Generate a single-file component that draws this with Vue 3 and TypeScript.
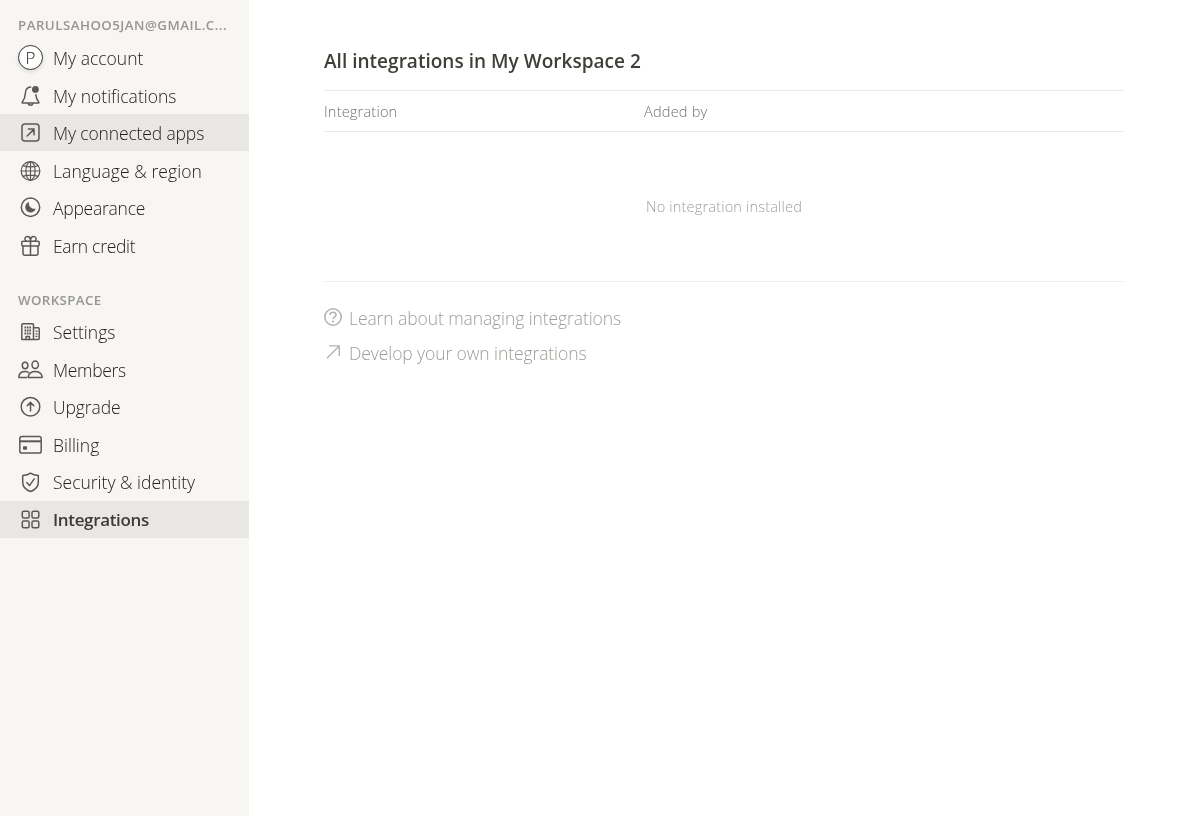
<script setup lang="ts">
interface NavItem {
  id: string
  label: string
  hovered?: boolean
  active?: boolean
}

interface NavSection {
  id: string
  title: string
  items: NavItem[]
}

const sections: NavSection[] = [
  {
    id: 'account',
    title: 'PARULSAHOO5JAN@GMAIL.C...',
    items: [
      { id: 'profile', label: 'My account' },
      { id: 'notifications', label: 'My notifications' },
      { id: 'apps', label: 'My connected apps', hovered: true },
      { id: 'language', label: 'Language & region' },
      { id: 'appearance', label: 'Appearance' },
      { id: 'credit', label: 'Earn credit' },
    ],
  },
  {
    id: 'workspace',
    title: 'WORKSPACE',
    items: [
      { id: 'settings', label: 'Settings' },
      { id: 'members', label: 'Members' },
      { id: 'upgrade', label: 'Upgrade' },
      { id: 'billing', label: 'Billing' },
      { id: 'security', label: 'Security & identity' },
      { id: 'integrations', label: 'Integrations', active: true },
    ],
  },
]
</script>

<template>
  <div class="page">
    <nav class="sidebar">
      <section v-for="s in sections" :key="s.id" :class="['section', s.id]">
        <h2 class="section-title">{{ s.title }}</h2>
        <a v-for="item in s.items" :key="item.id" :class="['item', item.id, { hovered: item.hovered, active: item.active }]">
          <span v-if="item.id === 'profile'" class="avatar"><span>P</span></span>
          <svg v-else class="icon" viewBox="0 0 25 25">
            <template v-if="item.id === 'notifications'">
              <path d="M12.7 4C9 4.3 7.5 6.7 7.4 10C7.3 14.5 6.1 16.7 4.2 19.2V20H20.8V19.2C19.1 17 18.1 15 17.8 11.8" />
              <path d="M10 20.6a2.6 2.3 0 0 0 5 0" />
              <circle class="solid" cx="17.4" cy="6.4" r="3.4" />
            </template>
            <template v-else-if="item.id === 'apps'">
              <rect x="4" y="4" width="17" height="17" rx="3" />
              <path d="M9.2 16L15.8 9.4M10.4 9.1H16v5.6" />
            </template>
            <template v-else-if="item.id === 'language'">
              <g class="fine">
                <circle cx="12.5" cy="13" r="9.3" />
                <ellipse cx="12.5" cy="13" rx="4.6" ry="9.3" />
                <path d="M12.5 3.7v18.6M3.2 13h18.6M5.2 7.6c4 1.7 10.6 1.7 14.6 0M5.2 18.4c4-1.7 10.6-1.7 14.6 0" />
              </g>
            </template>
            <template v-else-if="item.id === 'appearance'">
              <circle cx="12.5" cy="12.3" r="9.2" />
              <path class="solid" d="M11 7.1A5.3 5.3 0 1 0 17.7 13.6A5.4 5.4 0 0 1 11 7.1z" />
            </template>
            <template v-else-if="item.id === 'credit'">
              <rect x="3.8" y="8.3" width="17.4" height="4.7" rx="1.3" />
              <path d="M5 13v7.2a2 2 0 0 0 2 2h11a2 2 0 0 0 2-2V13M12.5 8.3v13.9" />
              <path d="M12.5 8.2C12.5 5.2 11.2 3.5 9.3 3.5C6.4 3.5 6.2 7 8.2 8.2M12.5 8.2C12.5 5.2 13.8 3.5 15.7 3.5C18.6 3.5 18.8 7 16.8 8.2" />
            </template>
            <template v-else-if="item.id === 'settings'">
              <path d="M3.8 19.6V4.7q0-1 1-1h9.7q1 0 1 1v14.9zM15.5 7.8h4.7q1 0 1 1v9.8q0 1-1 1h-4.7" />
              <path d="M8 19.6v-3h3.4v3" />
              <path class="dots" d="M6.5 7.5h6.5M6.5 10.5h6.5M6.5 13.5h6.5" />
              <path class="panes" d="M17.5 11.2h2M17.5 13.8h2M17.5 16.4h2" />
            </template>
            <template v-else-if="item.id === 'members'">
              <ellipse cx="7.1" cy="8.5" rx="2.8" ry="3.2" />
              <ellipse cx="17.2" cy="7.8" rx="3.2" ry="3.7" />
              <path d="M8.7 20.5H1.5Q.7 20.5 .8 19.6C1.2 16.5 3.7 14.4 7 14.4C8.5 14.4 9.7 14.8 10.7 15.5" />
              <path d="M11 20.6q-1 0-.8-1C10.9 16.5 13.6 14.5 17.2 14.5C20.8 14.5 23.5 16.5 24.2 19.6q.2 1-.8 1z" />
            </template>
            <template v-else-if="item.id === 'upgrade'">
              <circle cx="12.5" cy="11.7" r="9.3" />
              <path d="M12.5 16.1V7.5M9.2 10.7l3.3-3.3l3.3 3.3" />
            </template>
            <template v-else-if="item.id === 'billing'">
              <rect x="1.8" y="4.5" width="21.4" height="16.6" rx="2.2" />
              <path class="stripe" d="M2 9.3h21" />
              <rect class="solid" x="5" y="14.2" width="4" height="3.5" rx=".8" />
            </template>
            <template v-else-if="item.id === 'security'">
              <path d="M12.5 3.1C10.5 4.7 7.5 5.4 4.7 5.6V12.2C4.7 16.7 8 19.9 12.5 21.5C17 19.9 20.3 16.7 20.3 12.2V5.6C17.5 5.4 14.5 4.7 12.5 3.1z" />
              <path d="M8.8 12.6l2.7 3l4.7-6.7" />
            </template>
            <template v-else>
              <rect x="4.3" y="4.2" width="6.8" height="6.8" rx="1.5" />
              <rect x="14" y="4.2" width="6.8" height="6.8" rx="1.5" />
              <rect x="4.3" y="14" width="6.8" height="6.8" rx="1.5" />
              <rect x="14" y="14" width="6.8" height="6.8" rx="1.5" />
            </template>
          </svg>
          <span class="label">{{ item.label }}</span>
        </a>
      </section>
    </nav>

    <main class="content">
      <h1 class="title"><span>All integrations in My Workspace 2</span></h1>
      <div class="table-head">
        <span class="col-name">Integration</span>
        <span class="col-by">Added by</span>
      </div>
      <div class="empty"><span>No integration installed</span></div>
      <a class="link">
        <svg class="link-icon" viewBox="0 0 18 18">
          <circle cx="9" cy="9" r="8.2" />
          <path d="M6 7C6 5.2 7.2 4.2 9 4.2C10.8 4.2 12 5.2 12 6.8C12 8.9 9 8.8 9 11" />
          <circle class="point" cx="9" cy="13.6" r="1.1" />
        </svg>
        <span class="learn">Learn about managing integrations</span>
      </a>
      <a class="link">
        <svg class="link-icon arrow" viewBox="0 0 18 18">
          <path d="M3 15.2L15.2 3M5.2 2.9h10.1V13" />
        </svg>
        <span class="develop">Develop your own integrations</span>
      </a>
    </main>
  </div>
</template>

<style>
body {
  margin: 0;
  background: #fff;
}
</style>

<style scoped>
.page {
  display: flex;
  width: 100%;
  height: 816px;
  overflow: hidden;
  will-change: transform;
  font-family: 'Open Sans', 'Noto Sans', sans-serif;
  color: #37352f;
}

.sidebar {
  width: 249px;
  flex: none;
  background: #f7f6f3;
}

.section-title {
  box-sizing: border-box;
  height: 38.9px;
  margin: 0;
  padding: 15px 0 0 18px;
  font-size: 13.3px;
  line-height: 20px;
  font-weight: 600;
  letter-spacing: 0.47px;
  color: #979691;
  white-space: nowrap;
}

.workspace .section-title {
  height: 49.5px;
  padding-top: 26px;
  letter-spacing: 0.38px;
}

.item {
  box-sizing: border-box;
  display: flex;
  align-items: center;
  gap: 10px;
  height: 37.5px;
  padding-left: 18px;
  font-size: 17.5px;
  font-weight: 300;
  line-height: 24px;
  color: #24221d;
  white-space: nowrap;
}

.hovered,
.active {
  background: #e8e7e4;
}

.label {
  padding-top: 1px;
}

.workspace .label {
  padding-top: 0;
}

.apps .label {
  letter-spacing: -0.14px;
}

.language .label {
  letter-spacing: 0.08px;
}

.appearance .label {
  letter-spacing: -0.25px;
}

.credit .label {
  letter-spacing: -0.3px;
}

.members .label {
  letter-spacing: -0.35px;
}

.upgrade .label {
  letter-spacing: -0.1px;
}

.active .label {
  font-size: 17px;
  font-weight: 600;
  letter-spacing: -0.35px;
  color: #3d3b36;
}

.icon {
  width: 25px;
  height: 25px;
  flex: none;
  fill: none;
  stroke: #5b5954;
  stroke-width: 1.5;
  stroke-linejoin: round;
  stroke-linecap: round;
}

.icon .solid {
  fill: #5b5954;
  stroke: none;
}

.fine {
  stroke-width: 1.2;
}

.stripe {
  stroke-width: 2;
  stroke-linecap: butt;
}

.dots {
  stroke-width: 1.8;
  stroke-linecap: butt;
  stroke-dasharray: 1.7 0.7;
}

.panes {
  stroke-width: 1.3;
  stroke-linecap: butt;
}

.avatar {
  box-sizing: border-box;
  display: flex;
  align-items: center;
  justify-content: center;
  width: 25px;
  height: 25px;
  flex: none;
  border: 1.3px solid #37352f;
  border-radius: 50%;
  background: #fff;
  box-shadow: 0 2px 4px rgba(15, 15, 15, 0.12);
  font-size: 17px;
}

.content {
  width: 800px;
  margin-left: 75px;
}

.title {
  box-sizing: border-box;
  height: 90px;
  margin: 0;
  padding-top: 47px;
  font-size: 19px;
  line-height: 28px;
  font-weight: 600;
  letter-spacing: 0.02px;
  color: #403e38;
  white-space: nowrap;
}

.table-head {
  box-sizing: border-box;
  display: grid;
  grid-template-columns: 320px 1fr;
  align-items: center;
  height: 42px;
  border-top: 1px solid #e9e9e7;
  border-bottom: 1px solid #e9e9e7;
  font-size: 14.6px;
  letter-spacing: 0.17px;
  font-weight: 300;
  color: #73716b;
}

.empty {
  box-sizing: border-box;
  display: flex;
  align-items: center;
  justify-content: center;
  height: 150px;
  margin-bottom: 18.3px;
  padding-bottom: 2px;
  border-bottom: 1px solid #efefed;
  font-size: 14.6px;
  letter-spacing: 0.15px;
  font-weight: 300;
  color: #a19f9a;
}

.link {
  display: flex;
  align-items: center;
  gap: 7px;
  height: 35px;
  font-size: 17.5px;
  font-weight: 300;
  letter-spacing: -0.09px;
  line-height: 24px;
  color: #9f9d98;
  white-space: nowrap;
}

.link-icon {
  width: 18px;
  height: 18px;
  margin-top: -2px;
  flex: none;
  fill: none;
  stroke: #b4b3af;
  stroke-width: 1.6;
}

.arrow {
  stroke-width: 1.4;
}

.point {
  fill: #b4b3af;
  stroke: none;
}
</style>
